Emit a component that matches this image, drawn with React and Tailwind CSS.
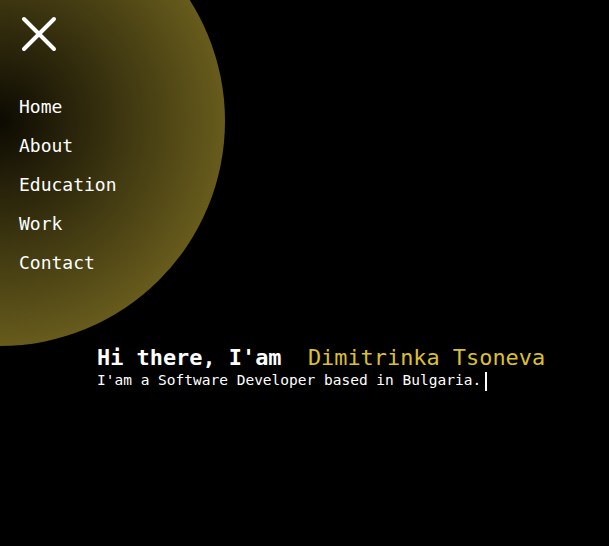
import React from "react";

const mono = { fontFamily: '"DejaVu Sans Mono", "Liberation Mono", monospace' };

export default function App() {
  const links = ["Home", "About", "Education", "Work", "Contact"];
  return (
    <div className="relative w-full h-[546px] bg-black overflow-hidden text-white" style={mono}>
      <main className="pt-[345px] pl-[97px]">
        <h1 className="text-[21.9px] leading-[26px] whitespace-pre">
          <span className="font-bold text-white">Hi there, I'am  </span>
          <span className="text-[#dcc02c]">Dimitrinka Tsoneva</span>
        </h1>
        <p className="mt-[1px] text-[14.5px] leading-[17px] text-white flex items-start">
          <span>I'am a Software Developer based in Bulgaria.</span>
          <span className="inline-block ml-[4px] w-[2px] h-[19px] bg-white" />
        </p>
      </main>

      <div className="absolute inset-0 pointer-events-none">
        <div className="absolute left-[-225px] top-[-104px] w-[450px] h-[450px] rounded-full bg-[radial-gradient(circle_closest-side,#0c0a02,#675b1c)]" />
      </div>

      <div className="absolute left-0 top-0">
        <button className="block ml-[19px] mt-[14px]" aria-label="Close menu">
          <svg width="40" height="40" viewBox="0 0 40 40">
            <line x1="5" y1="5" x2="35" y2="35" stroke="white" strokeWidth="4" strokeLinecap="round" />
            <line x1="35" y1="5" x2="5" y2="35" stroke="white" strokeWidth="4" strokeLinecap="round" />
          </svg>
        </button>
        <nav className="mt-[33px] pl-[19px]">
          <ul className="flex flex-col">
            {links.map((l) => (
              <li key={l} className="text-[18px] leading-[39px] text-white">
                {l}
              </li>
            ))}
          </ul>
        </nav>
      </div>
    </div>
  );
}
